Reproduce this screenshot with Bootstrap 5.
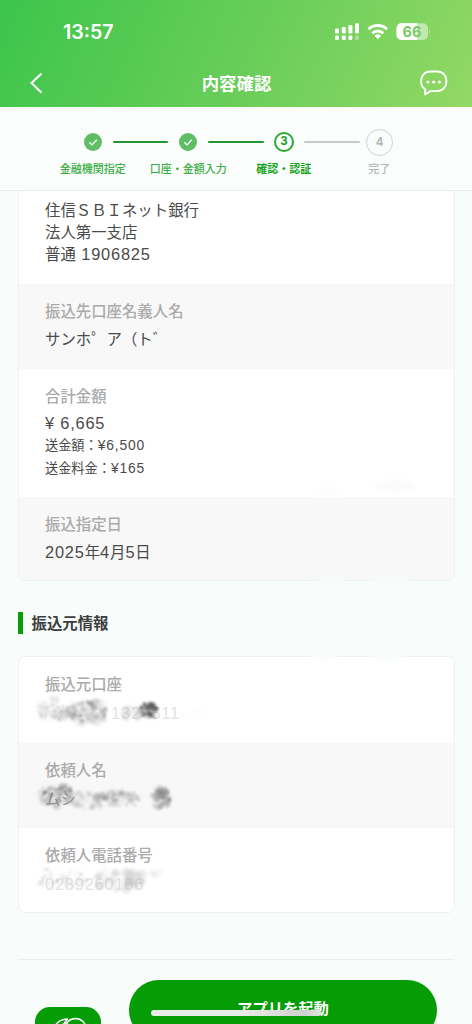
<!DOCTYPE html>
<html lang="ja">
<head>
<meta charset="utf-8">
<meta name="viewport" content="width=device-width, initial-scale=1">
<title>内容確認</title>
<link href="https://cdn.jsdelivr.net/npm/bootstrap@5.3.0/dist/css/bootstrap.min.css" rel="stylesheet">
<style>
  body { width: 472px; height: 1024px; overflow: hidden; background: #f8fcfb; color: #4a4a4a; font-family: "Noto Sans CJK JP", sans-serif; font-size: 15.4px; line-height: 22px; }
  .app-header { height: 107px; background: linear-gradient(115deg, #3cc54b 0%, #66cd58 50%, #93d865 100%); color: #fff; }
  .status-line { height: 64px; padding: 0 42px 0 63px; }
  .clock { font: 600 19.6px/24px Inter, sans-serif; }
  .title-line { height: 38px; padding: 0 24px 0 29px; }
  .page-title { font-size: 17.4px; font-weight: 700; margin: -1px 4px 0 0; }
  .steps { height: 84px; background: #fafdfc; border-bottom: 1px solid #eceeee; padding-top: 21px; }
  .step-marks { padding: 0 78.5px; gap: 6px; height: 28px; }
  .mark-box { width: 28px; flex: none; }
  .step-line { height: 2.6px; border-radius: 2px; background: #229432; flex: 1; }
  .step-line.todo { height: 1.6px; background: #c8cac9; }
  .step-names { padding: 0 45px; margin-top: 1px; font-size: 11px; color: #3cae46; font-weight: 500; }
  .step-names > div { flex: 1; white-space: nowrap; }
  .now { color: #16a320; font-weight: 700; }
  .later { color: #b5b7b6; }
  .num { border-radius: 50%; font: 700 11.5px/1 Inter, sans-serif; }
  .num-now { width: 20px; height: 20px; border: 2px solid #2aa835; color: #1ca326; }
  .num-later { width: 27px; height: 27px; border: 1.4px solid #cfd1d0; color: #b5b7b6; padding-top: 1px; }
  .panel { margin: 0 17.5px; border: 1.5px solid #eff1f1; border-radius: 7px; background: #fff; overflow: hidden; }
  .panel-top { border-top: 0; border-radius: 0 0 7px 7px; height: 390px; }
  .panel-low { height: 257px; margin-top: 22px; }
  .cell { padding: 15px 26px 0 26.5px; }
  .cell.tint { background: #f8f8f8; }
  .h-85 { height: 85px; } .h-86 { height: 86.5px; } .h-92 { height: 92.5px; } .h-128 { height: 128px; }
  .first-cell { padding-top: 7px; }
  .term { color: #aaa; font-weight: 500; margin-bottom: 6px; }
  .panel-low .term { margin-bottom: 7px; }
  .figure-l { font-family: "Liberation Sans", "Noto Sans CJK JP", sans-serif; font-size: 16.4px; letter-spacing: .8px; }
  .account-no { margin-left: 2px; }
  .fine { font-size: 13.2px; }
  .fine .figure-l { font-size: 13.8px; letter-spacing: .85px; }
  .section-name { margin: 30.5px 0 0 17.5px; border-left: 5px solid #089c08; padding-left: 9px; height: 22px; font-size: 15.4px; line-height: 21px; font-weight: 700; color: #3c3f3d; }
  .faint { color: #e3e3e3; }
  .dim { color: #8d8d8d; }
  .smudged { height: 22px; }
  .account-tail { margin-left: 66px; }
  .smudge { left: -12px; top: -9px; pointer-events: none; }
  .rule { margin: 46px 18px 0; height: 1px; background: #ecefee; }
  .launch { margin: 20px 35px 0; gap: 28px; }
  .app-tile { width: 66px; height: 66px; margin-top: 27px; border-radius: 15px; background: #069c06; }
  .launch-btn, .launch-btn:hover { width: 308px; height: 60px; border-radius: 30px; background: #069c06; color: #fff; font-size: 15.3px; font-weight: 700; padding: 0 0 5px; }
  .home-bar { left: 151px; top: 1010px; width: 170px; height: 5.5px; border-radius: 3px; background: linear-gradient(90deg, #e9ece9 55%, #cfcfcf 90%, #e0e3e0); }
  .smears { left: 300px; top: 470px; pointer-events: none; }
</style>
</head>
<body>
<header class="app-header">
  <div class="status-line d-flex align-items-center justify-content-between">
    <span class="clock">13:57</span>
    <svg width="96" height="20" viewBox="334 22 96 20" fill="#fff">
      <rect x="335" y="28.5" width="4" height="5" rx="1.2"/><rect x="341.8" y="27" width="4" height="6.5" rx="1.2"/><rect x="348.4" y="25" width="4" height="8.5" rx="1.2"/><rect x="355" y="23.2" width="4" height="10.3" rx="1.2"/>
      <rect x="335" y="35.6" width="4" height="4.3" rx="1.2"/><rect x="341.8" y="35.6" width="4" height="4.3" rx="1.2"/><rect x="348.4" y="35.6" width="4" height="4.3" rx="1.2"/><rect x="355" y="35.6" width="4" height="4.3" rx="1.2" opacity=".35"/>
      <g fill="none" stroke="#fff" stroke-width="2.9"><path d="M368.6 29.2a13.2 13.2 0 0 1 18.4 0"/><path d="M372.3 33.2a8 8 0 0 1 11 0"/></g>
      <path d="M374.6 35.8a4.3 4.3 0 0 1 6.400 0l-3.200 3.400z"/>
      <rect x="396.5" y="23.2" width="31.5" height="16.8" rx="5" opacity=".5"/>
      <path d="M401.5 23.2H417V40h-15.500a5 5 0 0 1-5-5v-6.800a5 5 0 0 1 5-5z"/>
      <path d="M429 29.500v4.500q1.600-2.200 0-4.500z" opacity=".55"/>
      <text x="412" y="36.800" text-anchor="middle" font-family="Inter" font-weight="700" font-size="14.500" fill="#7acb63">66</text>
    </svg>
  </div>
  <div class="title-line d-flex align-items-center justify-content-between">
    <svg width="28" height="24" viewBox="29 71 28 24" fill="none" stroke="#fff" stroke-width="2"><path d="M41.500 73.500 31.500 83l10 9.800"/></svg>
    <span class="page-title">内容確認</span>
    <svg width="28" height="26" viewBox="420 70 28 26" fill="none" stroke="#fff" stroke-width="1.900" stroke-linejoin="round"><path d="M430.500 71.500h6.500c6 0 9.500 4.200 9.500 9.700s-3.500 9.900-9.500 9.900h-6.500l-5.500 3.400.300-5.100c-2.800-1.800-4.200-4.800-4.200-8.200 0-5.500 3.400-9.700 9.400-9.700z"/><g fill="#fff" stroke="none"><circle cx="428" cy="82" r="1.600"/><circle cx="433.700" cy="82" r="1.600"/><circle cx="439.400" cy="82" r="1.600"/></g></svg>
  </div>
</header>

<nav class="steps">
  <div class="step-marks d-flex align-items-center">
    <div class="mark-box d-flex justify-content-center"><svg width="18" height="18" viewBox="0 0 18 18"><circle cx="9" cy="9" r="9" fill="#5fbe64"/><path d="m5.300 9.300 2.700 2.600 4.800-5.200" fill="none" stroke="#fff" stroke-width="1.300"/></svg></div>
    <div class="step-line"></div>
    <div class="mark-box d-flex justify-content-center"><svg width="18" height="18" viewBox="0 0 18 18"><circle cx="9" cy="9" r="9" fill="#5fbe64"/><path d="m5.300 9.300 2.700 2.600 4.800-5.200" fill="none" stroke="#fff" stroke-width="1.300"/></svg></div>
    <div class="step-line"></div>
    <div class="mark-box d-flex justify-content-center"><span class="num num-now d-flex align-items-center justify-content-center">3</span></div>
    <div class="step-line todo"></div>
    <div class="mark-box d-flex justify-content-center"><span class="num num-later d-flex align-items-center justify-content-center">4</span></div>
  </div>
  <div class="step-names d-flex text-center">
    <div>金融機関指定</div><div>口座・金額入力</div><div class="now">確認・認証</div><div class="later">完了</div>
  </div>
</nav>

<main>
  <section class="panel panel-top">
    <div class="cell h-92 first-cell">住信ＳＢＩネット銀行<br>法人第一支店<br>普通 <span class="figure-l account-no">1906825</span></div>
    <div class="cell tint h-85"><div class="term">振込先口座名義人名</div><div>サンホ゜ア（ト゛</div></div>
    <div class="cell h-128"><div class="term">合計金額</div><div class="figure-l">¥ 6,665</div>
      <div class="fine">送金額：<span class="figure-l">¥6,500</span></div><div class="fine">送金料金：<span class="figure-l">¥165</span></div></div>
    <div class="cell tint h-85"><div class="term">振込指定日</div><div><span class="figure-l">2025</span>年<span class="figure-l">4</span>月<span class="figure-l">5</span>日</div></div>
  </section>

  <h2 class="section-name mb-0">振込元情報</h2>

  <section class="panel panel-low">
    <div class="cell h-86"><div class="term">振込元口座</div><div class="smudged position-relative faint"><span class="figure-l account-tail">132&nbsp; 511</span><svg class="smudge position-absolute" id="smudge-account" width="180" height="40"></svg></div></div>
    <div class="cell tint h-85"><div class="term">依頼人名</div><div class="smudged position-relative dim">ムシ<svg class="smudge position-absolute" id="smudge-name" width="180" height="40"></svg></div></div>
    <div class="cell h-85"><div class="term">依頼人電話番号</div><div class="smudged position-relative faint"><span class="figure-l">0289260166</span><svg class="smudge position-absolute" id="smudge-phone" width="180" height="40"></svg></div></div>
  </section>

  <div class="rule"></div>
  <div class="launch d-flex align-items-start">
    <div class="app-tile flex-shrink-0"><svg width="66" height="66" fill="none" stroke="#fff" stroke-width="1.500"><circle cx="40.500" cy="22" r="10.500"/><path d="M18 25c1-8 7-13 15-13M23 25c1-6 5-9 10-9M33 12q-6 5-6 12"/></svg></div>
    <button class="btn launch-btn border-0 flex-shrink-0">アプリを起動</button>
  </div>
</main>
<div class="home-bar position-absolute"></div>
<svg class="smears position-absolute" width="130" height="210">
  <defs><filter id="soften"><feGaussianBlur stdDeviation="2.500"/></filter></defs>
  <g filter="url(#soften)"><ellipse cx="30" cy="111" rx="13" ry="4" fill="#f9fbfb"/><ellipse cx="90" cy="111" rx="20" ry="4" fill="#f9fbfb"/><ellipse cx="24" cy="187" rx="14" ry="4" fill="#fbfdfd"/><ellipse cx="87" cy="187" rx="19" ry="4" fill="#fbfdfd"/><ellipse cx="95" cy="16" rx="20" ry="6" fill="#fbfbfb"/><ellipse cx="30" cy="22" rx="14" ry="4" fill="#fcfcfc"/></g>
</svg>

<script src="https://cdn.jsdelivr.net/npm/bootstrap@5.3.0/dist/js/bootstrap.bundle.min.js"></script>
<script>
  // Scribbled-out values: clouds of [centre x, centre y, radius x, radius y, dots, grey, opacity, dot size]
  const clouds = {
    'smudge-account': [[22,18,18,13,40,180,.15,3.5],[22,20,16,8,40,130,.25,1.7],[55,20,21,13,60,170,.16,4],[55,20,19,11,65,120,.28,1.8],[102,21,12,9,25,190,.2,3.5],[116,18,9,8,50,70,.35,2.4],[116,18,11,9,20,80,.4,1.6],[160,22,16,6,8,210,.1,2]],
    'smudge-name': [[25,18,19,12,50,150,.18,3.6],[25,16,15,8,40,90,.28,1.9],[54,22,22,9,50,165,.2,3],[85,21,26,8,60,160,.22,3],[85,20,25,6,30,140,.25,1.9],[128,20,10,11,45,140,.24,3.4],[130,18,8,7,25,120,.3,2]],
    'smudge-phone': [[15,15,11,9,18,140,.28,1.4],[38,16,18,6,20,150,.25,1.4],[32,18,25,10,20,200,.12,3.5],[88,17,28,11,70,185,.14,4.2],[120,9,12,5,8,200,.12,3]]
  };
  let seed = 17;
  const rnd = () => (seed = (seed * 16807) % 2147483647) / 2147483647;
  for (const id in clouds) {
    let out = '<defs><filter id="' + id + '-b"><feGaussianBlur stdDeviation=".9"/></filter></defs><g filter="url(#' + id + '-b)">';
    for (const [cx, cy, rx, ry, n, g, o, s] of clouds[id]) {
      for (let i = 0; i < n; i++) {
        const a = rnd() * 6.283, d = Math.sqrt(rnd());
        out += `<circle cx="${cx + Math.cos(a) * d * rx}" cy="${cy + Math.sin(a) * d * ry}" r="${s * (.5 + rnd() * .6)}" fill="rgb(${g},${g},${g})" opacity="${o * (.6 + rnd() * .8)}"/>`;
      }
    }
    document.getElementById(id).innerHTML = out + '</g>';
  }
</script>
</body>
</html>
